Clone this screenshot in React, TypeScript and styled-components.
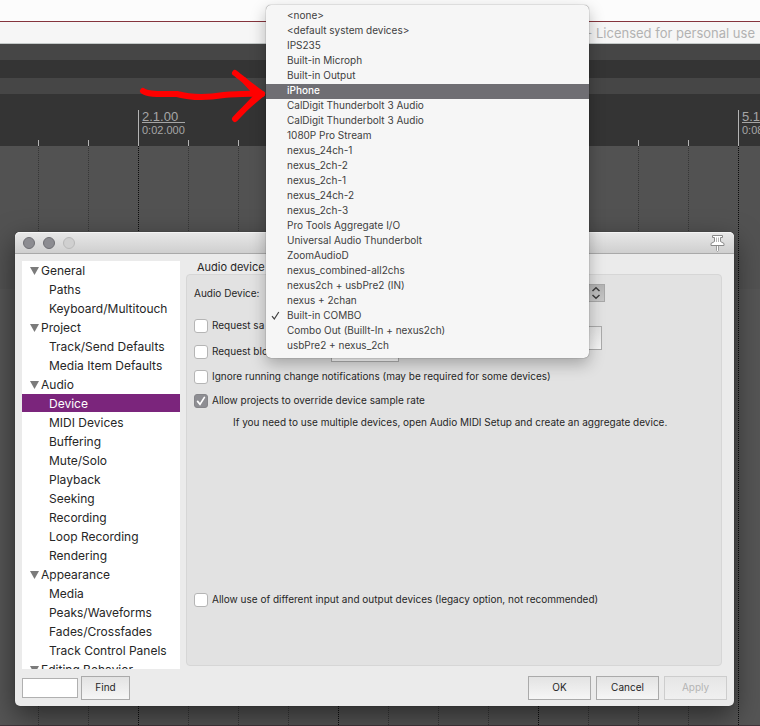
import React, { useState } from 'react';
import styled, { createGlobalStyle, css } from 'styled-components';

const GlobalStyle = createGlobalStyle`
  * { box-sizing: border-box; }
  body {
    margin: 0;
    font-family: Inter, "Liberation Sans", sans-serif;
    font-size: 10px;
    color: #262626;
    background: #525252;
  }
  button, input, select { font: inherit; color: inherit; margin: 0; }
`;

/* ---------- Arrange window ---------- */

const Desktop = styled.main`
  position: relative;
  display: flex;
  flex-direction: column;
  min-height: 100vh;
  overflow: hidden;
`;

const MenuStrip = styled.div`
  height: 22px;
  background: #fcfcfc;
  border-bottom: 1px solid #85343c;
`;

const WindowTitle = styled.header`
  height: 22px;
  padding-right: 5px;
  background: #f6f6f6;
  border-bottom: 1px solid #c4c9c8;
  color: #b2b2b2;
  font-size: 13px;
  line-height: 23px;
  text-align: right;
  white-space: nowrap;
`;

const Lane = styled.div<{ $dark?: boolean; $height: number }>`
  height: ${(p) => p.$height}px;
  background: ${(p) => (p.$dark ? '#343434' : '#464646')};
`;

const Ruler = styled.div`
  display: flex;
  align-items: flex-end;
  height: 52px;
  padding-left: 38px;
  overflow: hidden;
  background: #343434;
  color: #a6a6a6;
  font-family: "Liberation Sans", sans-serif;
`;

const Tick = styled.div<{ $major: boolean }>`
  flex: 0 0 50px;
  height: ${(p) => (p.$major ? 36 : 6)}px;
  padding-left: 3px;
  border-left: 1px solid #b4b4b4;
  white-space: nowrap;
`;

const Measure = styled.div`
  width: 43px;
  height: 13px;
  border-bottom: 1px solid #a6a6a6;
  font-size: 13px;
  line-height: 14px;
`;

const Time = styled.div`
  font-size: 11px;
  line-height: 15px;
`;

const Timeline = styled.div`
  display: flex;
  flex: 1;
  padding-left: 38px;
  overflow: hidden;
  background: linear-gradient(#525252 0 143px, #555 143px);
`;

const Beat = styled.div<{ $major: boolean }>`
  flex: 0 0 50px;
  border-left: 1px dotted ${(p) => (p.$major ? '#0c0c0c' : '#363636')};
`;

const TrackEdge = styled.div`
  height: 1px;
  background: #41353b;
`;

/* ---------- Preferences dialog ---------- */

const Dialog = styled.section`
  position: absolute;
  top: 232px;
  left: 15px;
  right: 26px;
  display: flex;
  flex-direction: column;
  border-radius: 5px;
  background: #ebebeb;
  box-shadow: 0 10px 28px rgba(0, 0, 0, 0.5), 0 0 1px rgba(0, 0, 0, 0.6);
`;

const TitleBar = styled.header`
  display: flex;
  align-items: center;
  gap: 8px;
  height: 22px;
  padding: 0 8px;
  border-bottom: 1px solid #a9a9a9;
  border-radius: 5px 5px 0 0;
  background: linear-gradient(#e8e8e8, #cfcfcf);
  box-shadow: inset 0 1px #f4f4f4;
`;

const WindowButton = styled.button<{ $inactive?: boolean }>`
  width: 12px;
  height: 12px;
  padding: 0;
  border: 1px solid ${(p) => (p.$inactive ? '#b9b9b9' : '#6e6e73')};
  border-radius: 50%;
  background: ${(p) => (p.$inactive ? '#d0d0d0' : '#8c8c91')};
`;

const PinButton = styled.button`
  margin-left: auto;
  width: 16px;
  height: 18px;
  padding: 0;
  border: 0;
  background: none;
  svg { display: block; }
`;

const Body = styled.div`
  display: flex;
  gap: 6px;
  padding: 7px 12px 0 7px;
`;

const Sidebar = styled.nav`
  flex: 0 0 158px;
  display: flex;
  flex-direction: column;
  gap: 1px;
  height: 408px;
  overflow: hidden;
  background: #fff;
`;

const TreeItem = styled.button<{ $group?: boolean; $selected?: boolean }>`
  display: flex;
  flex: 0 0 18px;
  align-items: center;
  gap: 2px;
  padding: 2px 0 0 ${(p) => (p.$group ? 8 : 27)}px;
  border: 0;
  background: ${(p) => (p.$selected ? '#7b257c' : 'transparent')};
  color: ${(p) => (p.$selected ? '#fff' : '#262626')};
  font-size: 12px;
  line-height: 16px;
  text-align: left;
  white-space: nowrap;
`;

const Page = styled.div`
  display: flex;
  flex: 1;
  flex-direction: column;
  min-width: 0;
  padding-bottom: 3px;
`;

const PageTitle = styled.h2`
  height: 13px;
  margin: 0 0 0 11px;
  font-size: 11px;
  font-weight: 400;
  line-height: 13px;
`;

const Panel = styled.div`
  display: flex;
  flex: 1;
  flex-direction: column;
  padding: 9px 7px 55px;
  border: 1px solid #d6d6d6;
  border-radius: 4px;
  background: #e2e2e2;
`;

const FieldRow = styled.div`
  display: flex;
  align-items: center;
  height: 18px;
`;

const FieldLabel = styled.label`
  width: 74px;
`;

const DeviceSelect = styled.div`
  display: flex;
  position: relative;
  width: 337px;
  height: 18px;
  select {
    flex: 1;
    appearance: none;
    padding: 0 20px 0 6px;
    border: 1px solid #a8a8a8;
    border-radius: 0;
    background: linear-gradient(#b4b4b4, #c6c6c6);
  }
  svg {
    position: absolute;
    top: 2px;
    right: 4px;
    pointer-events: none;
  }
`;

const RequestGroup = styled.div`
  display: flex;
  align-items: flex-start;
  justify-content: space-between;
  width: 408px;
  margin-top: 14px;
`;

const RequestFields = styled.div`
  display: flex;
  flex-direction: column;
  gap: 6px;
`;

const RequestAction = styled.div`
  padding-top: 10px;
`;

const CheckRow = styled.div<{ $last?: boolean }>`
  display: flex;
  align-items: center;
  height: 20px;
  ${(p) => p.$last && css`margin-top: auto;`}
`;

const CheckLabel = styled.label<{ $width?: number }>`
  ${(p) => p.$width && css`width: ${p.$width}px;`}
  padding: 0 0 2px 4px;
  white-space: nowrap;
`;

const CheckBox = styled.span`
  display: grid;
  width: 14px;
  height: 14px;
  > * { grid-area: 1 / 1; }
  input {
    appearance: none;
    width: 14px;
    height: 14px;
    border: 1px solid #b5b5b5;
    border-radius: 3px;
    background: #fff;
  }
  input:checked { background: #8e8e93; border-color: #858589; }
  svg { z-index: 1; visibility: hidden; pointer-events: none; }
  input:checked + svg { visibility: visible; }
`;

const CheckStack = styled.div`
  display: flex;
  flex-direction: column;
  gap: 4px;
  margin-top: 5px;
`;

const Help = styled.p`
  margin: 1px 0 0 39px;
  line-height: 20px;
  white-space: nowrap;
`;

const TextField = styled.input<{ $width: number }>`
  width: ${(p) => p.$width}px;
  height: 20px;
  padding: 0 4px;
  border: 1px solid #b0b0b0;
  background: #fff;
`;

const Footer = styled.footer`
  display: flex;
  align-items: center;
  justify-content: space-between;
  padding: 7px 7px 6px;
`;

const Cluster = styled.div<{ $gap: number }>`
  display: flex;
  align-items: center;
  gap: ${(p) => p.$gap}px;
`;

const PushButton = styled.button<{ $width: number }>`
  width: ${(p) => p.$width}px;
  height: 24px;
  padding: 0 0 2px;
  border: 1px solid #aaa;
  background: linear-gradient(#e3e3e3, #f6f6f6);
  &:disabled { border-color: #cdcdcd; color: #b4b4b4; background: linear-gradient(#e6e6e6, #f0f0f0); }
`;

/* ---------- Device pop-up ---------- */

const Popup = styled.div`
  position: absolute;
  top: 5px;
  left: 266px;
  display: flex;
  flex-direction: column;
  width: 323px;
  padding: 4px 0;
  border-radius: 5px;
  background: #f6f6f6;
  box-shadow: 0 0 1px rgba(0, 0, 0, 0.7), 0 6px 16px rgba(0, 0, 0, 0.28);
`;

const Option = styled.button<{ $active: boolean }>`
  display: flex;
  align-items: center;
  height: 15px;
  padding: 0 0 2px 5px;
  border: 0;
  background: ${(p) => (p.$active ? '#6f6e73' : 'transparent')};
  color: ${(p) => (p.$active ? '#fff' : '#404040')};
  font-weight: ${(p) => (p.$active ? 500 : 400)};
  line-height: 13px;
  text-align: left;
  white-space: nowrap;
`;

const Mark = styled.span`
  width: 16px;
  height: 9px;
  svg { display: block; }
`;

const Pointer = styled.svg`
  position: absolute;
  top: 64px;
  left: 136px;
  pointer-events: none;
`;

const beats = Array.from({ length: 15 }, (_, i) => i);
const isMajor = (beat: number) => beat % 4 === 2;
const rulerMarks: Record<number, [string, string]> = {
  2: ['2.1.00', '0:02.000'],
  14: ['5.1.00', '0:08.000'],
};

const tree = [
  { group: 'General', pages: ['Paths', 'Keyboard/Multitouch'] },
  { group: 'Project', pages: ['Track/Send Defaults', 'Media Item Defaults'] },
  {
    group: 'Audio',
    pages: ['Device', 'MIDI Devices', 'Buffering', 'Mute/Solo', 'Playback', 'Seeking', 'Recording', 'Loop Recording', 'Rendering'],
  },
  { group: 'Appearance', pages: ['Media', 'Peaks/Waveforms', 'Fades/Crossfades', 'Track Control Panels'] },
  { group: 'Editing Behavior', pages: [] },
];

const devices = [
  '<none>', '<default system devices>', 'IPS235', 'Built-in Microph', 'Built-in Output', 'iPhone',
  'CalDigit Thunderbolt 3 Audio', 'CalDigit Thunderbolt 3 Audio', '1080P Pro Stream', 'nexus_24ch-1',
  'nexus_2ch-2', 'nexus_2ch-1', 'nexus_24ch-2', 'nexus_2ch-3', 'Pro Tools Aggregate I/O',
  'Universal Audio Thunderbolt', 'ZoomAudioD', 'nexus_combined-all2chs', 'nexus2ch + usbPre2 (IN)',
  'nexus + 2chan', 'Built-in COMBO', 'Combo Out (Buillt-In + nexus2ch)', 'usbPre2 + nexus_2ch',
];

function Check({ id, label, checked = false, width }: { id: string; label: string; checked?: boolean; width?: number }) {
  return (
    <>
      <CheckBox>
        <input id={id} type="checkbox" defaultChecked={checked} />
        <svg width="14" height="14" viewBox="0 0 14 14" fill="none" stroke="#fff" strokeWidth="1.7" strokeLinecap="round">
          <path d="M3.6 7.4 6 10.4 10.4 3.4" />
        </svg>
      </CheckBox>
      <CheckLabel htmlFor={id} $width={width}>{label}</CheckLabel>
    </>
  );
}

export default function App() {
  const [page, setPage] = useState('Device');
  const [active, setActive] = useState(5);

  return (
    <Desktop>
      <GlobalStyle />
      <MenuStrip />
      <WindowTitle>- Licensed for personal use</WindowTitle>
      <Lane $height={16} />
      <Lane $height={18} $dark />
      <Lane $height={16} />
      <Ruler>
        {beats.map((beat) => (
          <Tick key={beat} $major={isMajor(beat)}>
            {rulerMarks[beat] && (
              <>
                <Measure>{rulerMarks[beat][0]}</Measure>
                <Time>{rulerMarks[beat][1]}</Time>
              </>
            )}
          </Tick>
        ))}
      </Ruler>
      <Timeline>
        {beats.map((beat) => <Beat key={beat} $major={isMajor(beat)} />)}
      </Timeline>
      <TrackEdge />

      <Dialog role="dialog" aria-label="Preferences">
        <TitleBar>
          <WindowButton aria-label="Close" />
          <WindowButton aria-label="Minimize" />
          <WindowButton aria-label="Zoom" $inactive />
          <PinButton aria-label="Keep on top">
            <svg width="16" height="18" viewBox="0 0 16 18" fill="#fff" stroke="#8a8a8a" strokeLinejoin="round">
              <path d="M6.500 11h2v5.500L7.500 17.500l-1-1z" strokeWidth="0.8" />
              <path d="M2.500 1.500h10v2h-2V7.500l3.500 2v2H1v-2l3.500-2V3.500h-2z" />
              <path d="M6.500 3.500V8M8.500 3.500V8" stroke="#a2a2a2" strokeWidth="0.8" />
            </svg>
          </PinButton>
        </TitleBar>

        <Body>
          <Sidebar aria-label="Preference pages">
            {tree.map(({ group, pages }) => (
              <React.Fragment key={group}>
                <TreeItem $group aria-expanded="true">
                  <svg width="9" height="8" viewBox="0 0 9 8" fill="#7b7b7b"><path d="M0 0h9L4.500 8z" /></svg>
                  {group}
                </TreeItem>
                {pages.map((name) => (
                  <TreeItem key={name} $selected={name === page} onClick={() => setPage(name)}>{name}</TreeItem>
                ))}
              </React.Fragment>
            ))}
          </Sidebar>

          <Page>
            <PageTitle>Audio device</PageTitle>
            <Panel>
              <FieldRow>
                <FieldLabel htmlFor="device">Audio Device:</FieldLabel>
                <DeviceSelect>
                  <select id="device" defaultValue="Built-in COMBO">
                    <option>Built-in COMBO</option>
                  </select>
                  <svg width="10" height="14" viewBox="0 0 10 14" fill="none" stroke="#3c3c3c" strokeWidth="1.5">
                    <path d="M1.500 5 5 1.800 8.500 5M1.500 9 5 12.200 8.500 9" />
                  </svg>
                </DeviceSelect>
              </FieldRow>
              <RequestGroup>
                <RequestFields>
                  <CheckRow>
                    <Check id="rate" label="Request sa" width={123} />
                    <TextField $width={68} aria-label="Sample rate" />
                  </CheckRow>
                  <CheckRow>
                    <Check id="block" label="Request blo" width={123} />
                    <TextField $width={68} aria-label="Block size" />
                  </CheckRow>
                </RequestFields>
                <RequestAction>
                  <PushButton $width={120} aria-label="Configure" />
                </RequestAction>
              </RequestGroup>
              <CheckStack>
                <CheckRow><Check id="ignore" label="Ignore running change notifications (may be required for some devices)" /></CheckRow>
                <CheckRow><Check id="override" label="Allow projects to override device sample rate" checked /></CheckRow>
              </CheckStack>
              <Help>If you need to use multiple devices, open Audio MIDI Setup and create an aggregate device.</Help>
              <CheckRow $last>
                <Check id="legacy" label="Allow use of different input and output devices (legacy option, not recommended)" />
              </CheckRow>
            </Panel>
          </Page>
        </Body>

        <Footer>
          <Cluster $gap={3}>
            <TextField $width={56} aria-label="Find text" />
            <PushButton $width={49}>Find</PushButton>
          </Cluster>
          <Cluster $gap={5}>
            <PushButton $width={63}>OK</PushButton>
            <PushButton $width={63}>Cancel</PushButton>
            <PushButton $width={63} disabled>Apply</PushButton>
          </Cluster>
        </Footer>
      </Dialog>

      <Popup role="listbox" aria-label="Audio Device">
        {devices.map((name, index) => (
          <Option key={index} role="option" aria-selected={name === 'Built-in COMBO'} $active={index === active} onMouseEnter={() => setActive(index)}>
            <Mark>
              {name === 'Built-in COMBO' && (
                <svg width="9" height="9" viewBox="0 0 9 9" fill="none" stroke="#404040" strokeWidth="1.200">
                  <path d="M1 5.200 3.300 8 7.800 1" />
                </svg>
              )}
            </Mark>
            {name}
          </Option>
        ))}
      </Popup>

      <Pointer width="132" height="62" viewBox="0 0 132 62" fill="none" stroke="#f00" strokeWidth="6" strokeLinecap="round" strokeLinejoin="round">
        <path d="M7 27C12 31 24 30 41 30C52 33 70 34 88 31C103 30 113 29 126 30" />
        <path d="M99 9C108 16 116 23 126 30C116 38 106 47 99 55L122 31L108 16" />
      </Pointer>
    </Desktop>
  );
}
